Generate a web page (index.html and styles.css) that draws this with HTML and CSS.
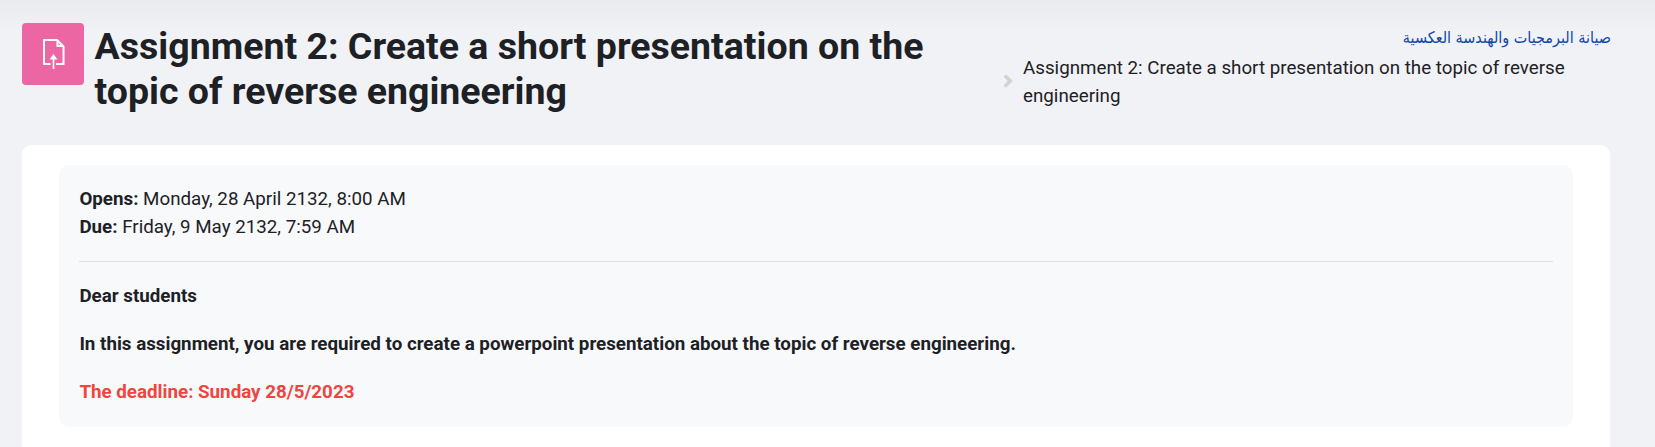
FILE: index.html
```html
<!DOCTYPE html>
<html lang="en">
<head>
<meta charset="utf-8">
<title>Assignment 2</title>
<link rel="stylesheet" href="styles.css">
</head>
<body>
<header class="header">
  <div class="icon">
    <svg width="24" height="32" viewBox="0 0 24 32"><path d="M8.500 26H2V2H15L21.500 8.500V26H14" fill="none" stroke="#fff" stroke-width="2"/><path d="M15.500 2V8H21.500" fill="none" stroke="#fff" stroke-width="2"/><path d="M11.500 31V18" stroke="#fff" stroke-width="1.700"/><path d="M11.500 16L15.500 21.500H7.500Z" fill="#fff"/></svg>
  </div>
  <h1 class="title">Assignment 2: Create a short presentation on the topic of reverse engineering</h1>
  <nav class="crumbs">
    <a class="course" dir="rtl" lang="ar">صيانة البرمجيات والهندسة العكسية</a>
    <div class="current">
      <svg class="chevron" width="10" height="14" viewBox="0 0 10 14" fill="none" stroke="#ced4da" stroke-width="3.600"><path d="M1.800 1.500L7.300 7L1.800 12.500"/></svg>
      <span>Assignment 2: Create a short presentation on the topic of reverse engineering</span>
    </div>
  </nav>
</header>
<main class="panel">
  <section class="card">
    <div class="dates">
      <div><strong>Opens:</strong> Monday, 28 April 2132, 8:00 AM</div>
      <div><strong>Due:</strong> Friday, 9 May 2132, 7:59 AM</div>
    </div>
    <p>Dear students</p>
    <p>In this assignment, you are required to create a powerpoint presentation about the topic of reverse engineering.</p>
    <p class="deadline">The deadline: Sunday 28/5/2023</p>
  </section>
</main>
</body>
</html>
```
FILE: styles.css
```css
* { box-sizing: border-box; }
html { overflow: hidden; }
body { margin: 0; height: 447px; overflow: hidden; display: flex; flex-direction: column; padding: 22px 45px 0 22px; background: linear-gradient(#eaebef, #f1f2f6 32px); font: 18.75px/28.125px Roboto, sans-serif; color: #1d2125; }
.header { display: flex; height: 123px; flex: none; }
.icon { width: 62px; height: 62px; margin-top: 1px; padding-left: 2px; border-radius: 4px; background: #eb66a2; display: flex; align-items: center; justify-content: center; flex: none; }
.title { margin: 2px 0 0 10.600px; width: 880px; font-size: 37.500px; line-height: 45px; font-weight: 700; flex: none; }
.crumbs { margin: 0 -1px 0 auto; width: 609px; padding-top: 2px; }
.course { display: block; color: #0f47ad; font: 16px/28px "DejaVu Sans Condensed", "DejaVu Sans", sans-serif; }
.current { display: flex; align-items: center; padding-top: 2px; }
.chevron { flex: none; margin: 0 10px 2px 1px; }
.panel { flex: 1; background: #fff; border-radius: 9px 9px 0 0; padding: 20px 37px; }
.card { background: #f8f9fb; border-radius: 10px; height: 262px; padding: 20px 20px 20px 20.400px; }
.dates { padding-bottom: 20px; border-bottom: 1px solid #dee2e6; margin-bottom: 20px; }
.card p { margin: 0 0 20px; font-weight: 700; line-height: 28px; }
.card .deadline { color: #ef4540; }
```
